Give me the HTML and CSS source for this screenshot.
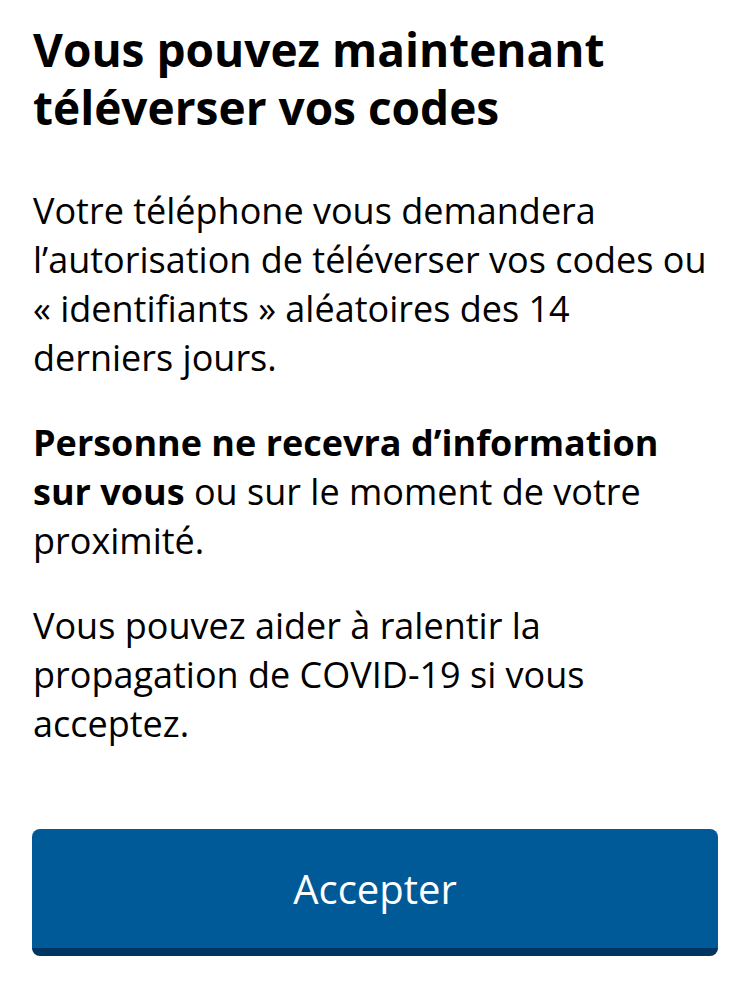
FILE: index.html
```html
<!DOCTYPE html>
<html lang="fr">
<head>
<meta charset="utf-8">
<link rel="stylesheet" href="styles.css">
</head>
<body>
<main class="screen">
  <h1 class="title">Vous pouvez maintenant téléverser vos codes</h1>
  <p class="text">Votre téléphone vous demandera l’autorisation de téléverser vos codes ou « identifiants » aléatoires des 14 derniers jours.</p>
  <p class="text"><strong>Personne ne recevra d’information sur vous</strong> ou sur le moment de votre proximité.</p>
  <p class="text">Vous pouvez aider à ralentir la propagation de COVID-19 si vous acceptez.</p>
  <button class="btn">Accepter</button>
</main>
</body>
</html>
```
FILE: styles.css
```css
html, body { margin: 0; padding: 0; background: #fff; }
body { font-family: "Open Sans", "Noto Sans", sans-serif; color: #000; }
.screen { padding: 20px 35px 0 33px; display: flex; flex-direction: column; }
.title { font-size: 46px; font-weight: 700; line-height: 58px; margin: 0 0 50px; }
.text { font-size: 36px; line-height: 49px; margin: 0 0 36px; }
.text strong { font-weight: 700; }
.btn {
  margin-top: 45px;
  height: 127px;
  width: 686px;
  margin-left: -1px;
  border: 0;
  border-bottom: 8px solid #003562;
  border-radius: 8px;
  background: #005a98;
  color: #fff;
  font-family: inherit;
  font-size: 40px;
  padding: 0;
}
```
